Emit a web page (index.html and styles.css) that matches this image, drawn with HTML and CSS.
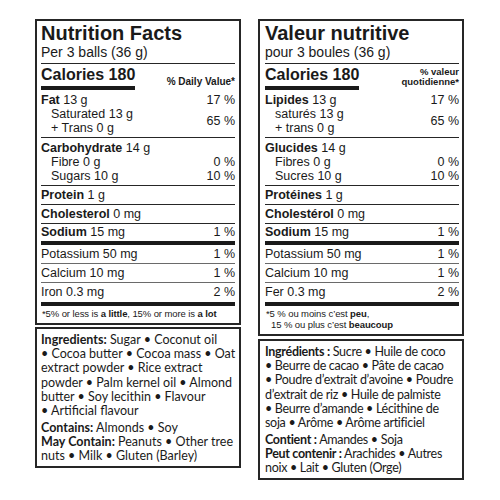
FILE: index.html
```html
<!DOCTYPE html>
<html lang="en">
<head>
<meta charset="utf-8">
<title>Nutrition Facts</title>
<link rel="stylesheet" href="styles.css">
</head>
<body>
<div class="page">
  <div class="col">
    <section class="nf">
      <h1 class="title">Nutrition Facts</h1>
      <div class="serving">Per 3 balls (36 g)</div>
      <div class="cal-row">
        <div class="cal">Calories 180</div>
        <div class="dv">% Daily Value*</div>
      </div>
      <div class="group">
        <div class="line"><span><b>Fat</b> 13 g</span><span>17 %</span></div>
        <div class="pair">
          <div class="subs"><div>Saturated 13 g</div><div>+ Trans 0 g</div></div>
          <span>65 %</span>
        </div>
      </div>
      <div class="group">
        <div class="line"><span><b>Carbohydrate</b> 14 g</span></div>
        <div class="line ind"><span>Fibre 0 g</span><span>0 %</span></div>
        <div class="line ind"><span>Sugars 10 g</span><span>10 %</span></div>
      </div>
      <div class="row"><span><b>Protein</b> 1 g</span></div>
      <div class="row"><span><b>Cholesterol</b> 0 mg</span></div>
      <div class="row sodium"><span><b>Sodium</b> 15 mg</span><span>1 %</span></div>
      <div class="row grey"><span>Potassium 50 mg</span><span>1 %</span></div>
      <div class="row grey"><span>Calcium 10 mg</span><span>1 %</span></div>
      <div class="row last"><span>Iron 0.3 mg</span><span>2 %</span></div>
      <div class="foot">*5% or less is <b>a little</b>, 15% or more is <b>a lot</b></div>
    </section>
    <section class="ing">
      <p><b>Ingredients:</b> Sugar • Coconut oil<br>• Cocoa butter • Cocoa mass • Oat<br>extract powder • Rice extract<br>powder • Palm kernel oil • Almond<br>butter • Soy lecithin • Flavour<br>• Artificial flavour</p>
      <p class="allergen"><b>Contains:</b> Almonds • Soy<br><b>May Contain:</b> Peanuts • Other tree<br>nuts • Milk • Gluten (Barley)</p>
    </section>
  </div>
  <div class="col fr">
    <section class="nf">
      <h1 class="title">Valeur nutritive</h1>
      <div class="serving">pour 3 boules (36 g)</div>
      <div class="cal-row">
        <div class="cal">Calories 180</div>
        <div class="dv two">% valeur<br>quotidienne*</div>
      </div>
      <div class="group">
        <div class="line"><span><b>Lipides</b> 13 g</span><span>17 %</span></div>
        <div class="pair">
          <div class="subs"><div>saturés 13 g</div><div>+ trans 0 g</div></div>
          <span>65 %</span>
        </div>
      </div>
      <div class="group">
        <div class="line"><span><b>Glucides</b> 14 g</span></div>
        <div class="line ind"><span>Fibres 0 g</span><span>0 %</span></div>
        <div class="line ind"><span>Sucres 10 g</span><span>10 %</span></div>
      </div>
      <div class="row"><span><b>Protéines</b> 1 g</span></div>
      <div class="row"><span><b>Cholestérol</b> 0 mg</span></div>
      <div class="row sodium"><span><b>Sodium</b> 15 mg</span><span>1 %</span></div>
      <div class="row grey"><span>Potassium 50 mg</span><span>1 %</span></div>
      <div class="row grey"><span>Calcium 10 mg</span><span>1 %</span></div>
      <div class="row last"><span>Fer 0.3 mg</span><span>2 %</span></div>
      <div class="foot"><div class="hang">*5 % ou moins c’est <b>peu</b>,<br>15 % ou plus c’est <b>beaucoup</b></div></div>
    </section>
    <section class="ing">
      <p><b>Ingrédients :</b> Sucre • Huile de coco<br>• Beurre de cacao • Pâte de cacao<br>• Poudre d’extrait d’avoine • Poudre<br>d’extrait de riz • Huile de palmiste<br>• Beurre d’amande • Lécithine de<br>soja • Arôme • Arôme artificiel</p>
      <p class="allergen"><b>Contient :</b> Amandes • Soja<br><b>Peut contenir :</b> Arachides • Autres<br>noix • Lait • Gluten (Orge)</p>
    </section>
  </div>
</div>
</body>
</html>
```

FILE: styles.css
```css
* {
  box-sizing: border-box;
  margin: 0;
  padding: 0;
}

body {
  margin: 0;
  background: #ffffff;
  color: #1a1a1a;
  font-family: "Liberation Sans", Arial, sans-serif;
}

.page {
  display: grid;
  grid-template-columns: 206px 206px;
  column-gap: 17px;
  align-items: start;
  padding: 19px 0 0 35px;
}

.col {
  display: flex;
  flex-direction: column;
}

.nf {
  border: 2px solid #262626;
  padding: 1px 4px 0 4px;
}

.fr .nf {
  padding: 1px 3px 0 5px;
}

.title {
  font-size: 20px;
  line-height: 22px;
  font-weight: 700;
}

.serving {
  font-size: 14px;
  line-height: 16px;
  padding-bottom: 3px;
  border-bottom: 1px solid #262626;
}

.cal-row {
  display: flex;
  justify-content: space-between;
  align-items: flex-end;
  padding-top: 2px;
}

.cal {
  font-size: 16px;
  line-height: 18px;
  font-weight: 700;
  padding-bottom: 2px;
  border-bottom: 4px solid #1a1a1a;
}

.dv {
  font-size: 10px;
  line-height: 12px;
  font-weight: 700;
  margin-bottom: 2.5px;
  text-align: right;
}

.dv.two {
  font-size: 9.5px;
  line-height: 10px;
  margin-bottom: 3px;
}

.group {
  font-size: 12.5px;
  padding: 3px 0 2px;
  border-bottom: 1px solid #262626;
}

.line {
  display: flex;
  justify-content: space-between;
  line-height: 14px;
}

.ind {
  padding-left: 10px;
}

.pair {
  display: flex;
  justify-content: space-between;
  align-items: center;
  line-height: 14px;
}

.subs {
  padding-left: 10px;
}

.row {
  display: flex;
  justify-content: space-between;
  font-size: 12.5px;
  line-height: 18px;
  border-bottom: 1px solid #262626;
}

.row.sodium {
  line-height: 17px;
  border-bottom: 4px solid #1a1a1a;
}

.row.grey {
  border-bottom-color: #6a6a6a;
}

.row.last {
  line-height: 19px;
  border-bottom: 4px solid #1a1a1a;
}

.foot {
  font-size: 9.5px;
  line-height: 11px;
  letter-spacing: -0.1px;
  padding: 2px 0 4px 1px;
}

.hang {
  padding-left: 5px;
  text-indent: -5px;
}

.ing {
  margin-top: 2px;
  border: 2px solid #262626;
  padding: 4px 4px 3px 4px;
  font-family: "Lato", "Liberation Sans", sans-serif;
  font-size: 12.5px;
  letter-spacing: 0;
  line-height: 14.2px;
  white-space: nowrap;
}

.fr .ing {
  margin-top: 3px;
  padding: 4px 3px 3px 5px;
  letter-spacing: -0.3px;
}

.allergen {
  margin-top: 2.5px;
}
```
